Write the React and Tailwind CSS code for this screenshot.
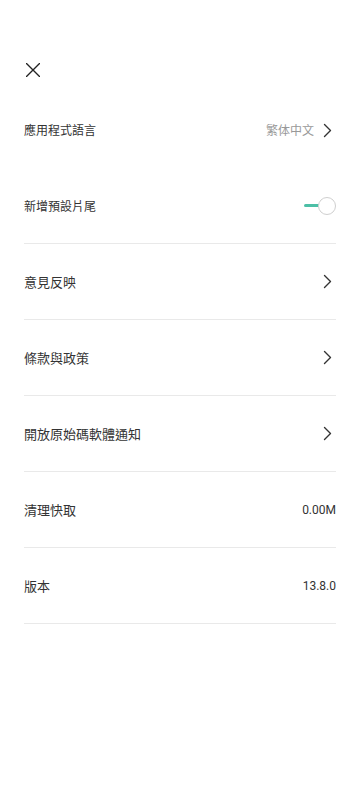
import React from "react";

const Chevron = () => (
  <svg width="9" height="15" viewBox="0 0 9 15" fill="none" className="shrink-0">
    <path d="M1.5 1.5 L7.5 7.5 L1.5 13.5" stroke="#333" strokeWidth="1.4" strokeLinecap="round" strokeLinejoin="round" />
  </svg>
);

const Row = ({ label, right, border = true, small = false }) => (
  <div className={`h-[76px] mx-6 flex items-center justify-between ${border ? "border-b border-[#e9e9e9]" : ""}`}>
    <span className={`${small ? "text-[12px]" : "text-[13px]"} text-[#333] leading-none`}>{label}</span>
    {right}
  </div>
);

export default function App() {
  return (
    <div className="w-[360px] h-[800px] bg-white" style={{ fontFamily: '"Noto Sans CJK TC", "Noto Sans", sans-serif' }}>
      <div className="h-[92px] pt-[63px] pl-[26px]">
        <svg width="14" height="14" viewBox="0 0 14 14" fill="none">
          <path d="M0.5 0.5 L13.5 13.5 M13.5 0.5 L0.5 13.5" stroke="#222" strokeWidth="1.4" strokeLinecap="round" />
        </svg>
      </div>
      <Row
        small
        border={false}
        label="應用程式語言"
        right={
          <div className="flex items-center gap-[9px] mr-[4px]">
            <span className="text-[12px] text-[#999] leading-none">繁体中文</span>
            <Chevron />
          </div>
        }
      />
      <Row
        small
        label="新增預設片尾"
        right={
          <div className="relative w-[32px] h-[18px] flex items-center">
            <div className="h-[3px] w-[18px] rounded-full bg-[#4cbfa6]" />
            <div className="absolute right-0 top-0 w-[18px] h-[18px] rounded-full bg-white border border-[#cfcfcf]" />
          </div>
        }
      />
      <Row label="意見反映" right={<div className="mr-[4px]"><Chevron /></div>} />
      <Row label="條款與政策" right={<div className="mr-[4px]"><Chevron /></div>} />
      <Row label="開放原始碼軟體通知" right={<div className="mr-[4px]"><Chevron /></div>} />
      <Row label="清理快取" right={<span className="text-[12px] text-[#333] leading-none" style={{ fontFamily: '"Roboto", sans-serif' }}>0.00M</span>} />
      <Row label="版本" right={<span className="text-[12px] text-[#333] leading-none" style={{ fontFamily: '"Roboto", sans-serif' }}>13.8.0</span>} />
    </div>
  );
}
